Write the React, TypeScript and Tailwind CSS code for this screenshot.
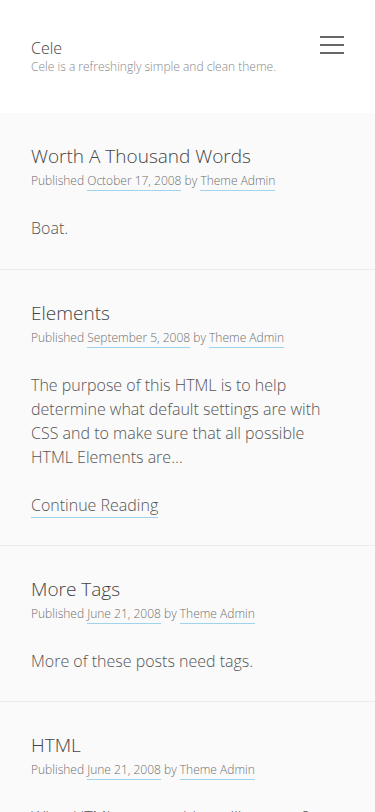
const posts = [
  {
    title: "Worth A Thousand Words",
    date: "October 17, 2008",
    body: ["Boat."],
    more: false,
  },
  {
    title: "Elements",
    date: "September 5, 2008",
    body: [
      "The purpose of this HTML is to help determine what default settings are with CSS and to make sure that all possible HTML Elements are…",
    ],
    more: true,
  },
  {
    title: "More Tags",
    date: "June 21, 2008",
    body: ["More of these posts need tags."],
    more: false,
  },
  {
    title: "HTML",
    date: "June 21, 2008",
    body: ["What HTML tags would you like to see?"],
    more: false,
  },
];

function Post({ post, first }: { post: (typeof posts)[number]; first: boolean }) {
  return (
    <article
      className={`px-[31px] pt-[30px] ${first ? "pb-[29px]" : "border-t border-[#ececec] pb-[28px]"}`}
    >
      <h2 className="text-[19px] leading-[26px] text-[#444]">{post.title}</h2>
      <p className="text-[12px] leading-[24px] text-[#6f6f6f]">
        Published{" "}
        <a href="#" className="border-b border-[#9fd3ee] pb-[1px]">
          {post.date}
        </a>{" "}
        by{" "}
        <a href="#" className="border-b border-[#9fd3ee] pb-[1px]">
          Theme Admin
        </a>
      </p>
      <div className="mt-[23px] text-[16px] leading-[24px] text-[#555]">
        {post.body.map((b) => (
          <p key={b} className="pr-[10px]">{b}</p>
        ))}
        {post.more && (
          <p className="mt-[24px]">
            <a href="#" className="border-b border-[#9fd3ee] pb-[1px] text-[#555]">
              Continue Reading
            </a>
          </p>
        )}
      </div>
    </article>
  );
}

export default function App() {
  return (
    <div className="min-h-[812px] bg-[#fafafa] font-['Open_Sans',sans-serif] font-light">
      <header className="flex h-[113px] items-start justify-between bg-white px-[31px] pt-[37px]">
        <div>
          <h1 className="text-[16px] leading-[22px] text-[#444]">Cele</h1>
          <p className="text-[12px] leading-[16px] text-[#888]">Cele is a refreshingly simple and clean theme.</p>
        </div>
        <button className="mt-[-2px] flex w-[24px] flex-col gap-[6px] pt-[1px]" aria-label="Menu">
          <span className="block h-[2px] w-full bg-[#666]" />
          <span className="block h-[2px] w-full bg-[#666]" />
          <span className="block h-[2px] w-full bg-[#666]" />
        </button>
      </header>
      <main>
        {posts.map((p, i) => (
          <Post key={p.title} post={p} first={i === 0} />
        ))}
      </main>
    </div>
  );
}
